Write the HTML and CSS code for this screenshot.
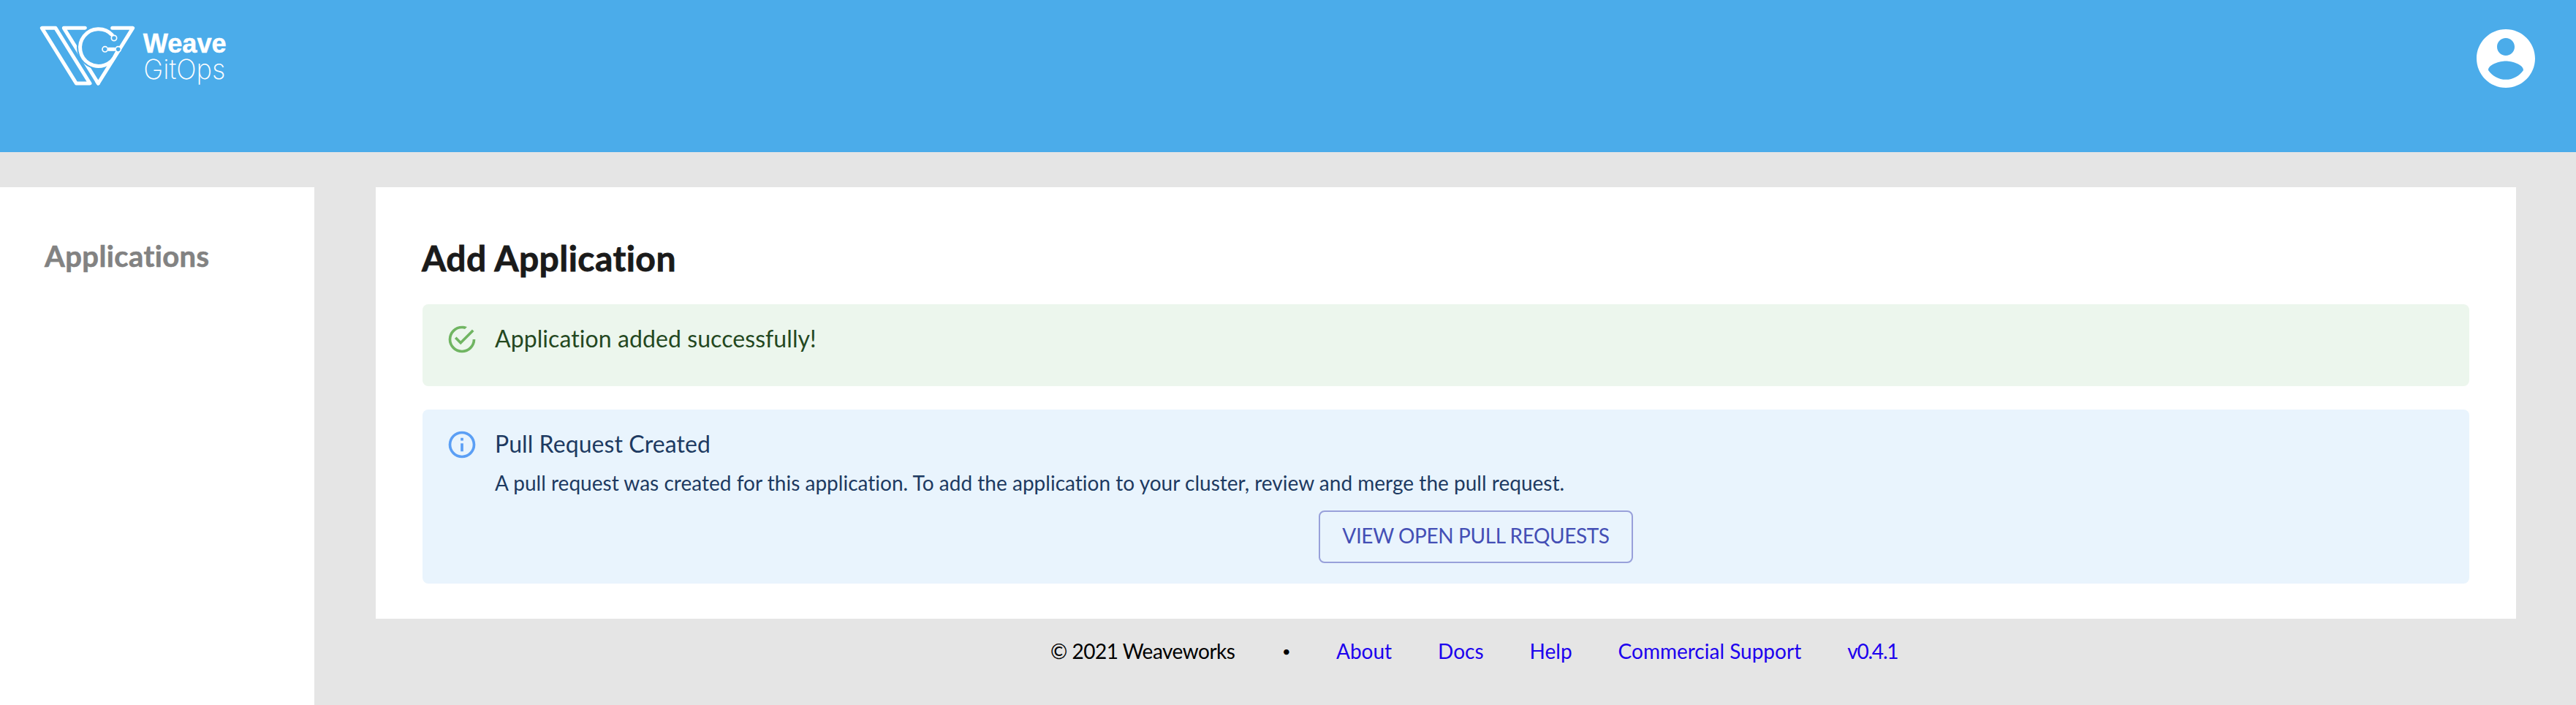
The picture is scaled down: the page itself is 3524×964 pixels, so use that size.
FILE: index.html
```html
<!DOCTYPE html>
<html lang="en">
<head>
<meta charset="utf-8">
<title>Weave GitOps</title>
<link rel="stylesheet" href="styles.css">
</head>
<body>
<header class="topbar">
  <svg class="logo" viewBox="0 0 900 330" role="img" aria-label="Weave GitOps">
    <g class="logo-lines">
      <path d="M82 55H138L279 282H223Z"/>
      <path d="M259 55H172L313 282"/>
      <circle class="logo-halo" cx="315" cy="134" r="90"/>
      <path d="M308 274L313 282L455 55H371"/>
      <path d="M370 83A76 76 0 1 0 385 164L395 146"/>
      <path class="logo-bar" d="M353 142H383"/>
      <g class="logo-nodes">
        <circle cx="378" cy="96" r="11"/>
        <circle cx="341" cy="142" r="11"/>
        <circle cx="395" cy="142" r="11"/>
      </g>
    </g>
    <text class="logo-weave" x="497" y="155" textLength="342" lengthAdjust="spacingAndGlyphs">Weave</text>
    <text class="logo-gitops" x="499" y="264" textLength="336" lengthAdjust="spacingAndGlyphs">GitOps</text>
  </svg>
  <svg class="account" viewBox="0 0 24 24" role="img" aria-label="Account"><path d="M12 2C6.48 2 2 6.48 2 12s4.48 10 10 10 10-4.48 10-10S17.52 2 12 2zm0 3c1.66 0 3 1.34 3 3s-1.34 3-3 3-3-1.34-3-3 1.34-3 3-3zm0 14.2c-2.5 0-4.71-1.28-6-3.22.03-1.99 4-3.08 6-3.08 1.99 0 5.97 1.09 6 3.08-1.29 1.94-3.5 3.22-6 3.22z"/></svg>
</header>
<div class="layout">
  <nav class="sidebar"><a class="nav-link">Applications</a></nav>
  <div class="content">
    <main class="page">
      <h2 class="title">Add Application</h2>
      <section class="alert alert-success">
        <svg class="alert-icon" viewBox="0 0 24 24"><path d="M20,12A8,8 0 0,1 12,20A8,8 0 0,1 4,12A8,8 0 0,1 12,4C12.76,4 13.5,4.11 14.2,4.31L15.77,2.74C14.61,2.26 13.34,2 12,2A10,10 0 0,0 2,12A10,10 0 0,0 12,22A10,10 0 0,0 22,12M7.91,10.08L6.5,11.5L11,16L21,6L19.59,4.58L11,13.17L7.91,10.08Z"/></svg>
        <div class="alert-message"><div class="alert-title">Application added successfully!</div></div>
      </section>
      <section class="alert alert-info">
        <svg class="alert-icon" viewBox="0 0 24 24"><path d="M11,9H13V7H11M12,20C7.59,20 4,16.41 4,12C4,7.59 7.59,4 12,4C16.41,4 20,7.59 20,12C20,16.41 16.41,20 12,20M12,2A10,10 0 0,0 2,12A10,10 0 0,0 12,22A10,10 0 0,0 22,12A10,10 0 0,0 12,2M11,17H13V11H11V17Z"/></svg>
        <div class="alert-message">
          <div class="alert-title">Pull Request Created</div>
          <p class="alert-body">A pull request was created for this application. To add the application to your cluster, review and merge the pull request.</p>
          <button class="button">VIEW OPEN PULL REQUESTS</button>
        </div>
      </section>
    </main>
    <footer class="footer">
      <span class="copyright">© 2021 Weaveworks</span>
      <span class="dot">•</span>
      <span class="links">
        <a class="link">About</a>
        <a class="link">Docs</a>
        <a class="link">Help</a>
        <a class="link">Commercial Support</a>
        <a class="link version">v0.4.1</a>
      </span>
    </footer>
  </div>
</div>
</body>
</html>
```
FILE: styles.css
```css
* { box-sizing: border-box; }
body {
  margin: 0;
  min-height: 964px;
  display: flex;
  flex-direction: column;
  background: #e5e5e5;
  font-family: "Proxima Nova", Lato, "Liberation Sans", sans-serif;
  font-size: 28px;
  line-height: 34px;
  font-variant-ligatures: none;
  color: #000;
}
.topbar {
  height: 208px;
  padding: 20px 48px 0 30px;
  display: flex;
  justify-content: space-between;
  align-items: flex-start;
  background: #4bacea;
}
.logo { width: 300px; height: 110px; }
.logo-lines { fill: none; stroke: #fff; stroke-width: 15; stroke-linecap: round; stroke-linejoin: round; }
.logo-halo { fill: #4bacea; stroke: none; }
.logo-bar { stroke-linecap: butt; }
.logo-nodes { fill: #4bacea; stroke-width: 5; }
.logo-weave { font: 700 113px "Liberation Sans", sans-serif; fill: #fff; stroke: #fff; stroke-width: 1.5; }
.logo-gitops { font: 250 112px Inter, sans-serif; fill: #fff; }
.account { width: 96px; height: 96px; margin-top: 12px; fill: #fff; }

.layout { flex: 1; display: flex; padding-top: 48px; }
.sidebar { width: 430px; padding: 71px 61px 0; background: #fff; }
.nav-link { font-size: 40px; font-weight: 700; line-height: 46px; letter-spacing: 0.4px; color: #828282; -webkit-text-stroke: 0.6px #828282; }
.content { flex: 1; margin-left: 84px; }
.page { width: 2928px; padding: 69px 64px 48px; background: #fff; }
.title { margin: 0 0 35px -1px; font-size: 48px; font-weight: 700; line-height: 56px; letter-spacing: 0.45px; color: #1a1a1a; -webkit-text-stroke: 0.8px #1a1a1a; }

.alert { display: flex; gap: 23px; padding: 26px 15px 28px 32px; border-radius: 8px; }
.alert-success { height: 112px; margin-bottom: 32px; background: #ecf6ed; color: #24481f; }
.alert-info { background: #e9f4fd; color: #1d3a61; }
.alert-icon { width: 44px; height: 44px; flex: none; fill: #70b562; }
.alert-info .alert-icon { fill: #5b9ff5; }
.alert-message { flex: 1; padding-top: 2px; display: flex; flex-direction: column; }
.alert-title { font-size: 32px; line-height: 38px; letter-spacing: 0.08px; }
.alert-body { margin: 17px 0 21px; letter-spacing: 0.015px; }
.button {
  align-self: center;
  width: 430px;
  height: 72px;
  margin-right: 2px;
  padding: 0 0 4px;
  border: 2px solid #98a0da;
  border-radius: 8px;
  background: transparent;
  font: inherit;
  line-height: 64px;
  letter-spacing: -0.4px;
  color: #444fb5;
}

.footer { padding: 27px 0 0 923px; display: flex; gap: 64px; }
.copyright { width: 253px; white-space: nowrap; letter-spacing: -0.5px; }
.dot { width: 10px; font-size: 20px; }
.links { display: flex; gap: 63px; }
.link { color: #1c00ee; }
.version { letter-spacing: -1.2px; }
```
